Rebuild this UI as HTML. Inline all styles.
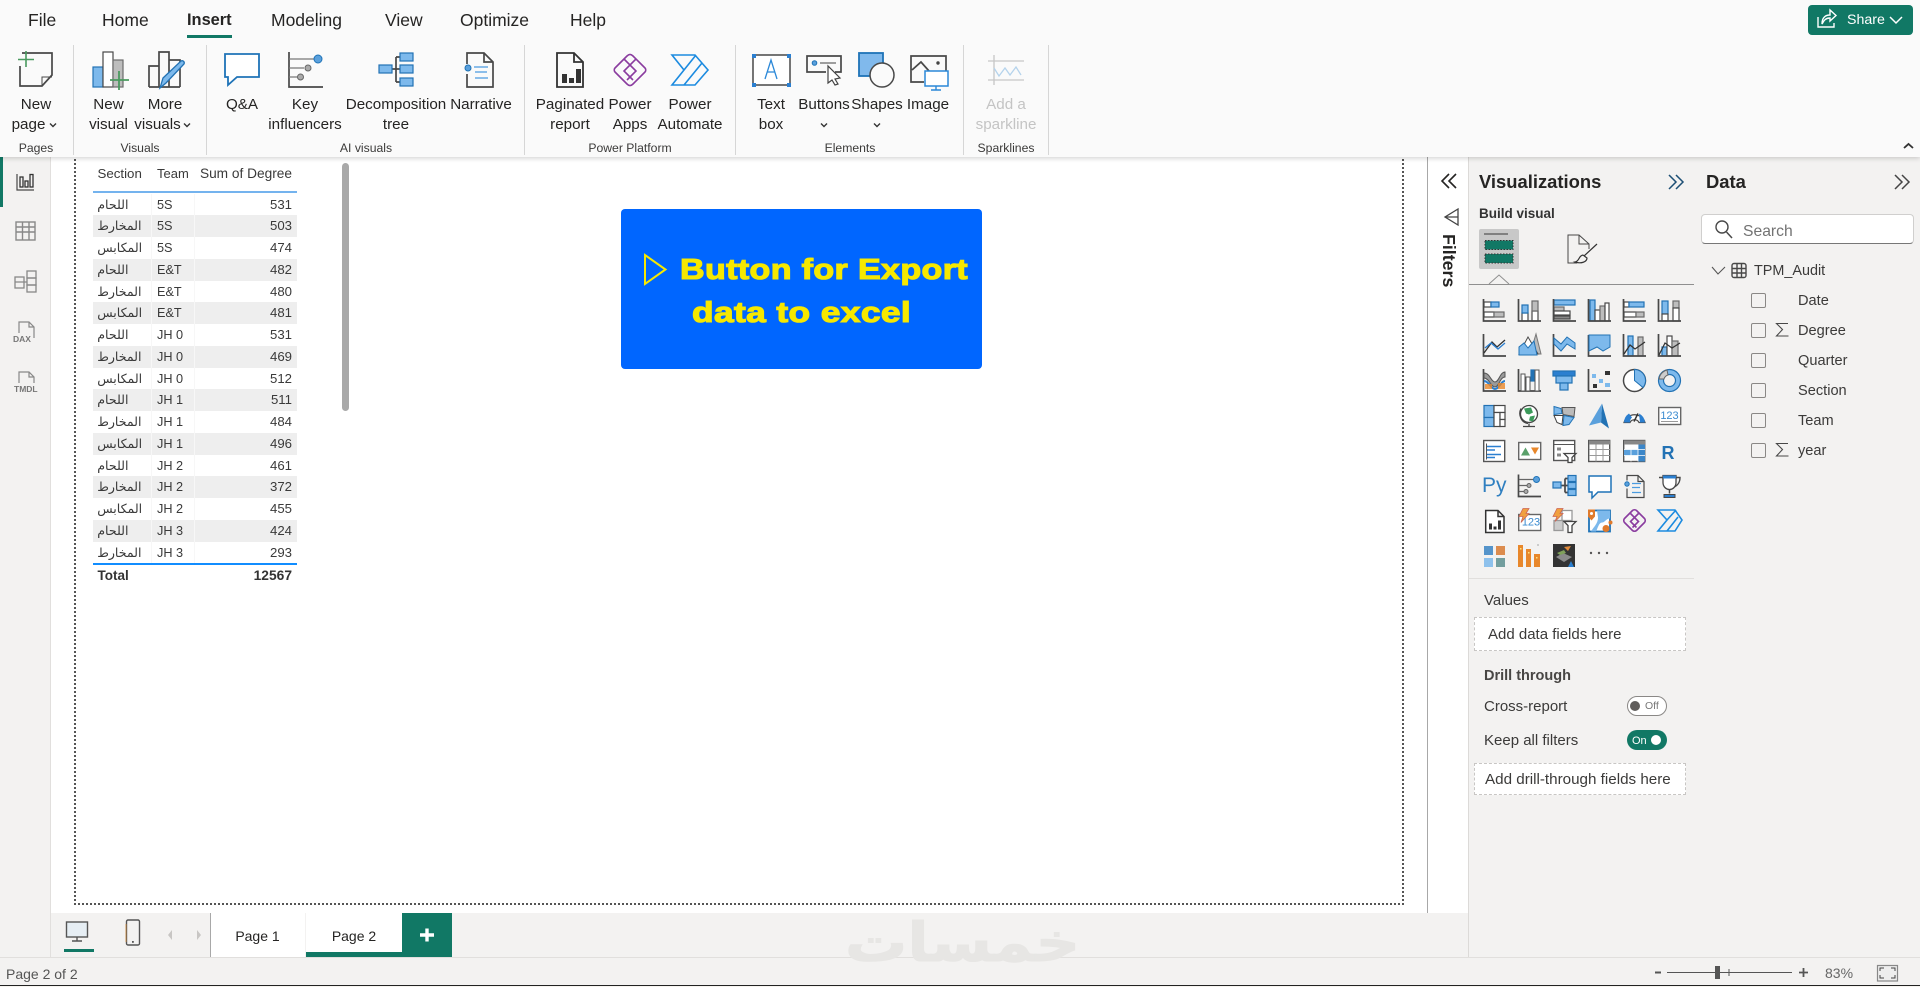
<!DOCTYPE html>
<html><head><meta charset="utf-8"><title>Power BI Desktop</title>
<style>
html,body{margin:0;padding:0;width:1920px;height:987px;overflow:hidden;background:#fff}
body{position:relative;font-family:"Liberation Sans","DejaVu Sans",sans-serif;color:#252423}
.a{position:absolute;white-space:nowrap}
.c{position:absolute;white-space:nowrap;transform:translateX(-50%);text-align:center}
.tab{position:absolute;top:10px;font-size:17.5px;line-height:20px;color:#252423}
.rl{font-size:15.2px;line-height:20px;color:#252423}
.gl{font-size:12.2px;line-height:14px;top:141px;color:#3b3a39}
.sep{position:absolute;top:45px;height:110px;width:1px;background:#d6d6d6}
.row{position:absolute;left:93px;width:204px;height:21.75px;margin-top:-.3px;font-size:12.7px;line-height:21.75px;color:#3a3a3a}
.row.s{background:#eee}
.row:after{content:"";position:absolute;left:58px;top:0;bottom:0;width:1px;background:#f7f7f7}
.row:before{content:"";position:absolute;left:101px;top:0;bottom:0;width:1px;background:#f7f7f7;z-index:1}
.row b{font-weight:normal;position:absolute;left:4.2px;top:0;font-family:"DejaVu Sans",sans-serif;font-size:12.6px}
.row i{font-style:normal;position:absolute;left:64px;top:.8px}
.row u{text-decoration:none;position:absolute;right:5px;top:0;font-size:13.2px}
.f{position:absolute;left:1798px;font-size:14.6px;line-height:18px;color:#3b3a39}
.cb{position:absolute;left:1750.5px;width:13px;height:13px;border:1px solid #8a8886;border-radius:2px}
.box{position:absolute;left:1474px;width:212px;background:#fff;border:1px dashed #c8c6c4;box-sizing:border-box;color:#3b3a39}
.ft{font-size:15px;line-height:18px;color:#3b3a39}
svg{position:absolute;left:0;top:0;overflow:visible}
.k{fill:none;stroke:#484848;stroke-width:1.7}
.k1{fill:none;stroke:#484848;stroke-width:1}
.b{fill:none;stroke:#1f73b7;stroke-width:1.5}
.w{fill:#fff;stroke:#484848;stroke-width:1.2}
.lb{fill:#7db9ec;stroke:#2272b4;stroke-width:1.2}
.bb{fill:#2272b4}
.g{fill:#bdbdbd;stroke:#6b6b6b;stroke-width:1.2}
.p{fill:none;stroke:#8a3c9f;stroke-width:1.6}
.au{fill:none;stroke:#1c8be0;stroke-width:1.6}
.or{fill:#e8872b}
.bt{font-size:29px;line-height:38px;font-weight:bold;color:#f6e800;-webkit-text-stroke:1.1px #f6e800;letter-spacing:.3px;transform-origin:0 50%}
</style></head><body>

<!-- canvas -->
<div class="a" style="left:0;top:157px;width:51px;height:800px;background:#f3f2f1;border-right:1px solid #e1dfdd;box-sizing:border-box"></div>
<div class="a" style="left:0;top:157px;width:3px;height:50px;background:#117865"></div>
<div class="a" style="left:74px;top:120px;width:1330px;height:785px;border:2px dotted #555;box-sizing:border-box"></div>
<div class="a" style="left:1427px;top:157px;width:1px;height:756px;background:#a8a8a8"></div>
<div class="a" style="left:1468px;top:157px;width:226px;height:800px;background:#f3f2f1;border-left:1px solid #dcdad8;border-right:1px solid #dcdad8;box-sizing:content-box"></div>
<div class="a" style="left:1695px;top:157px;width:225px;height:800px;background:#f3f2f1"></div>
<div class="a" style="left:51px;top:913px;width:1417px;height:44px;background:#f3f2f1"></div>

<!-- table -->
<div class="a" style="left:97.5px;top:165px;font-size:13.3px;line-height:18px;color:#3a3a3a">Section</div>
<div class="a" style="left:157px;top:165px;font-size:13px;line-height:18px;color:#3a3a3a">Team</div>
<div class="a" style="right:1628px;top:165px;font-size:13.7px;line-height:18px;color:#3a3a3a">Sum of Degree</div>
<div class="a" style="left:93px;top:191px;width:204px;height:2px;background:#74b3ee"></div>
<div class="row" style="top:194px"><b>اللحام</b><i>5S</i><u>531</u></div>
<div class="row s" style="top:215.7px"><b>المخارط</b><i>5S</i><u>503</u></div>
<div class="row" style="top:237.5px"><b>المكابس</b><i>5S</i><u>474</u></div>
<div class="row s" style="top:259.2px"><b>اللحام</b><i>E&amp;T</i><u>482</u></div>
<div class="row" style="top:281px"><b>المخارط</b><i>E&amp;T</i><u>480</u></div>
<div class="row s" style="top:302.7px"><b>المكابس</b><i>E&amp;T</i><u>481</u></div>
<div class="row" style="top:324.5px"><b>اللحام</b><i>JH 0</i><u>531</u></div>
<div class="row s" style="top:346.2px"><b>المخارط</b><i>JH 0</i><u>469</u></div>
<div class="row" style="top:368px"><b>المكابس</b><i>JH 0</i><u>512</u></div>
<div class="row s" style="top:389.7px"><b>اللحام</b><i>JH 1</i><u>511</u></div>
<div class="row" style="top:411.5px"><b>المخارط</b><i>JH 1</i><u>484</u></div>
<div class="row s" style="top:433.2px"><b>المكابس</b><i>JH 1</i><u>496</u></div>
<div class="row" style="top:455px"><b>اللحام</b><i>JH 2</i><u>461</u></div>
<div class="row s" style="top:476.7px"><b>المخارط</b><i>JH 2</i><u>372</u></div>
<div class="row" style="top:498.5px"><b>المكابس</b><i>JH 2</i><u>455</u></div>
<div class="row s" style="top:520.2px"><b>اللحام</b><i>JH 3</i><u>424</u></div>
<div class="row" style="top:542px"><b>المخارط</b><i>JH 3</i><u>293</u></div>
<div class="a" style="left:93px;top:563px;width:204px;height:2px;background:#118dff"></div>
<div class="a" style="left:97.5px;top:567px;font-size:13.5px;line-height:18px;font-weight:bold;color:#333">Total</div>
<div class="a" style="right:1628px;top:567px;font-size:13.8px;line-height:18px;font-weight:bold;color:#333">12567</div>
<div class="a" style="left:342px;top:163px;width:7px;height:248px;background:#a9a9a9;border-radius:4px"></div>

<!-- export button -->
<div class="a" style="left:621px;top:209px;width:361px;height:160px;background:#0066ff;border-radius:4px"></div>
<div class="a bt" style="left:680px;top:251px;transform:scaleX(1.175)">Button for Export</div>
<div class="a bt" style="left:692px;top:294px;transform:scaleX(1.22)">data to excel</div>

<!-- ribbon -->
<div class="a" style="left:0;top:0;width:1920px;height:157px;background:#fafafa;box-shadow:0 1px 5px rgba(0,0,0,.2)"></div>
<div class="tab" style="left:28px">File</div>
<div class="tab" style="left:102px">Home</div>
<div class="tab" style="left:187px;font-weight:bold;font-size:16.4px">Insert</div>
<div class="tab" style="left:271px">Modeling</div>
<div class="tab" style="left:385px">View</div>
<div class="tab" style="left:460px">Optimize</div>
<div class="tab" style="left:570px">Help</div>
<div class="a" style="left:187px;top:35px;width:45px;height:3px;background:#117865"></div>
<div class="sep" style="left:73px"></div><div class="sep" style="left:206px"></div><div class="sep" style="left:524px"></div><div class="sep" style="left:735px"></div><div class="sep" style="left:963px"></div><div class="sep" style="left:1048px"></div>

<div class="c rl" style="left:36px;top:95px">New</div><div class="c rl" style="left:28.5px;top:115px">page</div>
<div class="c rl" style="left:108.5px;top:95px">New<br>visual</div>
<div class="c rl" style="left:165px;top:95px">More</div><div class="c rl" style="left:157.5px;top:115px">visuals</div>
<div class="c rl" style="left:242px;top:95px">Q&amp;A</div>
<div class="c rl" style="left:305px;top:95px">Key<br>influencers</div>
<div class="c rl" style="left:396px;top:95px">Decomposition<br>tree</div>
<div class="c rl" style="left:481px;top:95px">Narrative</div>
<div class="c rl" style="left:570px;top:95px">Paginated<br>report</div>
<div class="c rl" style="left:630px;top:95px">Power<br>Apps</div>
<div class="c rl" style="left:690px;top:95px">Power<br>Automate</div>
<div class="c rl" style="left:771px;top:95px">Text<br>box</div>
<div class="c rl" style="left:824px;top:95px">Buttons</div>
<div class="c rl" style="left:877px;top:95px">Shapes</div>
<div class="c rl" style="left:928px;top:95px">Image</div>
<div class="c rl" style="left:1006px;top:95px;color:#c4c4c4">Add a<br>sparkline</div>

<div class="c gl" style="left:36px">Pages</div><div class="c gl" style="left:140px">Visuals</div><div class="c gl" style="left:366px">AI visuals</div><div class="c gl" style="left:630px">Power Platform</div><div class="c gl" style="left:850px">Elements</div><div class="c gl" style="left:1006px">Sparklines</div>

<!-- share -->
<div class="a" style="left:1808px;top:5px;width:105px;height:30px;background:#117865;border-radius:4px"></div>
<div class="a" style="left:1847px;top:10px;font-size:14.2px;line-height:20px;color:#fff">Share</div>

<!-- filters / panes text -->
<div class="a" style="left:1439px;top:234px;writing-mode:vertical-rl;font-size:17.8px;line-height:20px;font-weight:bold;color:#252423">Filters</div>
<div class="a" style="left:1479px;top:171px;font-size:18.4px;line-height:22px;font-weight:bold">Visualizations</div>
<div class="a" style="left:1706px;top:171px;font-size:18.4px;line-height:22px;font-weight:bold">Data</div>
<div class="a" style="left:1479px;top:206px;font-size:13.5px;line-height:16px;font-weight:bold;color:#333">Build visual</div>
<div class="a" style="left:1479px;top:229px;width:40px;height:40px;background:#c8c8c8;border-radius:2px"></div>
<div class="a" style="left:1469px;top:284px;width:225px;height:1px;background:#8f8f8f"></div>
<div class="a" style="left:1469px;top:578px;width:225px;height:1px;background:#e1dfdd"></div>
<div class="a ft" style="left:1484px;top:591.5px">Values</div>
<div class="box ft" style="top:617px;height:34px;line-height:33px;padding-left:13px">Add data fields here</div>
<div class="a" style="left:1484px;top:667px;font-size:14.5px;line-height:18px;font-weight:bold;color:#484644">Drill through</div>
<div class="a ft" style="left:1484px;top:697.5px">Cross-report</div>
<div class="a ft" style="left:1484px;top:732px">Keep all filters</div>
<div class="a" style="left:1627px;top:696px;width:40px;height:20px;border:1px solid #8a8886;border-radius:10px;background:#fff;box-sizing:border-box"></div>
<div class="a" style="left:1630px;top:701px;width:10px;height:10px;border-radius:50%;background:#605e5c"></div>
<div class="a" style="left:1645px;top:700px;font-size:10.5px;line-height:13px;color:#777">Off</div>
<div class="a" style="left:1627px;top:730px;width:40px;height:20px;border-radius:10px;background:#117865"></div>
<div class="a" style="left:1632px;top:734px;font-size:11px;line-height:14px;color:#fff">On</div>
<div class="a" style="left:1651px;top:735px;width:10px;height:10px;border-radius:50%;background:#fff"></div>
<div class="box" style="top:763px;height:32px;line-height:32px;padding-left:10px;font-size:15.2px">Add drill-through fields here</div>

<!-- data pane -->
<div class="a" style="left:1701px;top:214px;width:213px;height:30px;background:#fff;border:1px solid #d0cfce;border-bottom-color:#777;border-radius:4px;box-sizing:border-box"></div>
<div class="a" style="left:1743px;top:222.5px;font-size:15.7px;line-height:18px;color:#737373">Search</div>
<div class="a" style="left:1754px;top:262px;font-size:14.4px;line-height:18px;color:#3b3a39">TPM_Audit</div>
<div class="cb" style="top:292.5px"></div><div class="f" style="top:292px">Date</div>
<div class="cb" style="top:322.5px"></div><div class="f" style="top:322px">Degree</div>
<div class="cb" style="top:352.5px"></div><div class="f" style="top:352px">Quarter</div>
<div class="cb" style="top:382.5px"></div><div class="f" style="top:382px">Section</div>
<div class="cb" style="top:412.5px"></div><div class="f" style="top:412px">Team</div>
<div class="cb" style="top:442.5px"></div><div class="f" style="top:442px">year</div>

<!-- bottom tabs -->
<div class="a" style="left:210px;top:913px;width:1px;height:44px;background:#a8a8a8"></div>
<div class="a" style="left:211px;top:913px;width:94px;height:44px;background:#fff"></div>
<div class="a" style="left:306px;top:913px;width:96px;height:44px;background:#fff"></div>
<div class="a" style="left:306px;top:952px;width:96px;height:5px;background:#117865"></div>
<div class="a" style="left:402px;top:913px;width:50px;height:44px;background:#117865"></div>
<div class="c" style="left:257.5px;top:927px;font-size:14px;line-height:18px">Page 1</div>
<div class="c" style="left:354px;top:927px;font-size:14px;line-height:18px">Page 2</div>
<div class="a" style="left:64px;top:949px;width:30px;height:3px;background:#117865"></div>

<!-- status -->
<div class="a" style="left:0;top:957px;width:1920px;height:28px;background:#f3f2f1;border-top:1px solid #e1dfdd;box-sizing:border-box"></div>
<div class="a" style="left:0;top:985px;width:1920px;height:1px;background:#222"></div>
<div class="a" style="left:0;top:986px;width:1920px;height:1px;background:#f6f4ef"></div>
<div class="a" style="left:6px;top:965px;font-size:14px;line-height:18px;color:#555">Page 2 of 2</div>
<div class="a" style="left:1825px;top:964px;font-size:14px;line-height:18px;color:#666">83%</div>
<div class="a" style="left:845px;top:908px;font-family:'DejaVu Sans',sans-serif;font-weight:bold;font-size:54px;line-height:70px;color:#e7e6e4;-webkit-text-stroke:1px #e7e6e4;transform-origin:0 50%;transform:scaleX(1.15)" dir="rtl">خمسات</div>

<svg width="1920" height="987" viewBox="0 0 1920 987">
<!-- small chevrons -->
<g fill="none" stroke="#333" stroke-width="1.4">
<path d="M50 123.500l3 3 3-3M184 123.500l3 3 3-3M821 123.500l3 3 3-3M874 123.500l3 3 3-3"/>
</g>
<!-- New page -->
<path class="k" d="M22 53H52V75L42 86H20V66"/><path class="k1" d="M42 86V77H52"/>
<path d="M18 59.500H34M26 51V67" stroke="#4a9a5f" stroke-width="1.600" fill="none"/>
<!-- New visual -->
<rect class="lb" x="93" y="67" width="10" height="20"/><rect class="w" x="103" y="52" width="10" height="35"/><rect class="g" x="113" y="60" width="10" height="27"/>
<path d="M110 80H129M119 71V90" stroke="#4a9a5f" stroke-width="1.800" fill="none"/>
<!-- More visuals -->
<path class="k" d="M149 87V66H159M159 87V52H169V87M169 60H180V87M149 87H180"/>
<path d="M160 88l3-10 18-17c2-1 4 1 3 3L166 83z" fill="#7db9ec" stroke="#2272b4" stroke-width="1.300"/>
<!-- Q&A -->
<path d="M225 54H259V77H237L228 85V77H225Z" fill="#fff" stroke="#1f73b7" stroke-width="1.800"/>
<!-- Key influencers -->
<path class="k" d="M289 52V87H323"/><path d="M289 59H314M289 68H304M289 77H298" stroke="#777" stroke-width="1.300"/>
<circle cx="318" cy="59" r="4" fill="#5aa0dc" stroke="#1f73b7"/><circle cx="308" cy="68" r="3" fill="#aaa" stroke="#666"/><circle cx="300.500" cy="77" r="3" fill="#aaa" stroke="#666"/>
<!-- Decomposition -->
<g><path class="k" d="M392 69H396M396 57V82M396 57H400M396 69H400M396 82H400"/><rect class="lb" x="379" y="65" width="13" height="8"/><rect class="lb" x="400" y="53" width="13" height="8"/><rect class="lb" x="400" y="65" width="13" height="8"/><rect class="lb" x="400" y="78" width="13" height="8"/></g>
<!-- Narrative -->
<path class="k" d="M467 64V53H484L493 62V87H467V74M484 53V62H493"/><circle cx="468" cy="68" r="3" fill="#5aa0dc" stroke="#1f73b7"/><path d="M474 67H488M475 72H487M475 78H488" stroke="#4a9be0" stroke-width="1.300"/>
<!-- Paginated -->
<path d="M557 53H574L583 62V87H557Z M574 53V62H583" fill="none" stroke="#333" stroke-width="1.800"/><path d="M562 74h5v9h-5zM569 78h5v5h-5zM576 69h5v14h-5z" fill="#333"/>
<!-- Power Apps -->
<g transform="translate(630 70)"><path class="p" d="M-3-14C-1-16 1-16 3-14L15-2C16-1 16 1 15 2L3 14C1 16-1 16-3 14L-15 2C-16 1-16-1-15-2Z"/><path class="p" d="M-6-11L6 1-3 10M6-11L-6 1 3 10" stroke-width="1.400"/></g>
<!-- Power Automate -->
<path class="au" d="M672 55H695L708 70 695 85H672L684 70Z M684 70L696 55M684 85L702 63"/>
<!-- Text box -->
<rect x="753" y="55" width="37" height="30" fill="#fff" stroke="#484848" stroke-width="1.500"/><path d="M752 54h4v4h-4zM787 54h4v4h-4zM752 83h4v4h-4zM787 83h4v4h-4z" fill="#2b7fd0"/><path d="M765 79L771 60 777 79M767 72H775" fill="none" stroke="#2b88d8" stroke-width="1.300"/>
<!-- Buttons -->
<path class="k" d="M826 72H807V56H841V72H835"/><circle cx="814.500" cy="63" r="2.300" fill="#5aa0dc" stroke="#1f73b7"/><path d="M820 63H836" stroke="#777" stroke-width="1.400"/><path d="M828 66V83L832 80 835 85 838 84 835 79 840 78Z" fill="#fff" stroke="#444" stroke-width="1.200"/>
<!-- Shapes -->
<rect x="859" y="53" width="24" height="23" fill="#80b9ec" stroke="#1f73b7" stroke-width="1.800"/><circle cx="882" cy="75" r="12" fill="#fafafa" stroke="#484848" stroke-width="1.500"/>
<!-- Image -->
<path class="k" d="M924 82H911V56H946V71M912 70L921 62 929 71"/><circle cx="938" cy="63" r="1.700" fill="#444"/><rect x="925" y="71" width="23" height="15" fill="#fff" stroke="#2b88d8" stroke-width="1.500"/><path d="M936 86V90M931 90H941" stroke="#2b88d8" stroke-width="1.400"/>
<!-- Sparkline -->
<path d="M988 61H1024M988 80H1024M994 55V85" stroke="#c6c6c6" stroke-width="1.300" fill="none"/><path d="M994 68L999 76 1005 68 1010 75 1016 67 1021 75" stroke="#b5d3ec" stroke-width="1.300" fill="none"/>

<!-- Share icon -->
<g fill="none" stroke="#fff" stroke-width="1.400"><path d="M1818 17V27H1834V23M1822 24C1822 17 1826 15 1830 15V10L1836 15.500 1830 21V18C1826 18 1824 20 1822 24Z"/><path d="M1890 17l6 6 6-6" stroke-width="1.500"/></g>
<path d="M1904 148l4.500-4 4.500 4" fill="none" stroke="#333" stroke-width="1.800"/>

<!-- pane chevrons -->
<g fill="none" stroke="#252423" stroke-width="1.500">
<path d="M1449 174l-7 7 7 7M1456 174l-7 7 7 7" stroke-width="1.600"/>
<path d="M1669 175l7 7-7 7M1676 175l7 7-7 7" stroke="#1d4f75"/><path d="M1895 175l7 7-7 7M1902 175l7 7-7 7" stroke="#444"/>
<path d="M1458 209V225L1445 217ZM1458 217H1446" stroke="#444" stroke-width="1.300"/>
</g>
<!-- build icons -->
<path d="M1484 234H1508" stroke="#555" stroke-width="1.300"/>
<rect x="1485" y="240.500" width="28" height="9" fill="#117865" stroke="#333" stroke-width="1" stroke-dasharray="1.500 1.500"/>
<rect x="1485" y="254" width="28" height="9" fill="#117865" stroke="#333" stroke-width="1" stroke-dasharray="1.500 1.500"/>
<path class="k1" d="M1577 263H1568V235H1579L1589 244V249M1579 235V244H1589" stroke="#333"/>
<path d="M1597 244L1584 256M1583 255C1578 256 1580 261 1575 262 1581 264 1587 262 1587 258L1583 255" fill="none" stroke="#333" stroke-width="1.200"/>
<path d="M1489 284L1499 275 1509 284" fill="#f3f2f1" stroke="#8f8f8f"/>

<!-- data icons -->
<circle cx="1722" cy="227" r="6" fill="none" stroke="#484848" stroke-width="1.400"/><path d="M1726.500 232L1732 238" stroke="#484848" stroke-width="1.500"/>
<path d="M1712 267l6 7 7-7" fill="none" stroke="#555" stroke-width="1.100"/>
<g fill="none" stroke="#484848" stroke-width="1.400"><rect x="1732" y="263.500" width="14" height="14" rx="2"/><path d="M1737 263.500V277.500M1741.500 263.500V277.500M1732 268.500H1746M1732 273H1746"/></g>
<path d="M1788 323.500H1776.500L1782.500 329.500 1776.500 336H1788.500" fill="none" stroke="#484848" stroke-width="1.100"/>
<path d="M1788 443.500H1776.500L1782.500 449.500 1776.500 456H1788.500" fill="none" stroke="#484848" stroke-width="1.100"/>

<!-- left rail -->
<path d="M17 174V190H34" fill="none" stroke="#484848" stroke-width="1.200"/><g fill="none" stroke="#333" stroke-width="1.300"><rect x="20" y="177" width="3" height="10"/><rect x="25" y="181" width="3" height="6"/><rect x="30" y="174.500" width="3" height="12.500"/></g>
<g fill="none" stroke="#888" stroke-width="1.400"><rect x="16" y="222" width="19" height="18"/><path d="M16 227H35M16 232H35M22.500 222V240M29 222V240"/></g>
<g fill="none" stroke="#888" stroke-width="1.300"><rect x="15" y="277" width="9" height="11"/><path d="M15 282H24M24 282H27"/><rect x="27" y="271" width="9" height="7"/><rect x="27" y="278" width="9" height="7"/><rect x="27" y="285" width="9" height="7"/></g>
<path d="M19 333V322H29L34 327V338M29 322V327H34" fill="none" stroke="#888" stroke-width="1.200"/>
<text x="13" y="342" font-size="8.500" font-weight="bold" fill="#777" font-family="Liberation Sans">DAX</text>
<path d="M19 383V372H29L34 377V383M29 372V377H34" fill="none" stroke="#888" stroke-width="1.200"/>
<text x="14" y="392" font-size="8.500" font-weight="bold" fill="#777" font-family="Liberation Sans">TMDL</text>

<!-- bottom icons -->
<g fill="none" stroke="#555" stroke-width="1.400"><rect x="66.500" y="922" width="21" height="15" fill="#e6eef4"/><path d="M77 937V941M72 941H82"/></g>
<rect x="126.500" y="920" width="13" height="25" rx="1.500" fill="none" stroke="#555" stroke-width="1.400"/><rect x="132" y="941" width="1.800" height="1.800" fill="#555"/><path d="M126 924V942" stroke="#d08a3c" stroke-width=".8"/>
<path d="M172 930l-4 5 4 5zM197 930l4 5-4 5z" fill="#c8c6c4"/>
<path d="M427 928.500V941.500M420 935H434" stroke="#fff" stroke-width="3.400"/>

<!-- zoom -->
<path d="M1655 972.500H1661" stroke="#555" stroke-width="2"/><path d="M1667 972.500H1792M1729 969V976" stroke="#555" stroke-width="1"/>
<rect x="1715" y="966" width="5" height="13" fill="#555"/><path d="M1799 972.500H1808M1803.500 968V977" stroke="#555" stroke-width="1.800"/>
<rect x="1877.500" y="965.500" width="20" height="15.500" fill="#eee" stroke="#888" stroke-width="1.200"/><path d="M1880 971V968H1884M1891 968H1895V971M1895 975V978H1891M1884 978H1880V975" fill="none" stroke="#444" stroke-width="1"/>

<!-- VIZ GRID -->
<!-- row 1 -->
<g transform="translate(1483 299)"><rect class="w" x="1" y="3" width="7" height="5"/><rect class="lb" x="8" y="3" width="8" height="5"/><rect class="w" x="1" y="13" width="10" height="5"/><rect class="g" x="11" y="13" width="10" height="5"/><path class="k" d="M.500 0V22H23"/></g>
<g transform="translate(1518 299)"><rect class="w" x="4" y="14" width="6" height="8"/><rect class="lb" x="4" y="6" width="6" height="8"/><rect class="w" x="14" y="12" width="6" height="10"/><rect class="g" x="14" y="2" width="6" height="10"/><path class="k" d="M.500 0V22H23"/></g>
<g transform="translate(1553 299)"><rect class="lb" x="1" y="1" width="21" height="5"/><rect class="g" x="1" y="8" width="10" height="4"/><rect class="w" x="1" y="12" width="16" height="4"/><rect class="w" x="1" y="17" width="16" height="3" style="fill:#888"/><path class="k" d="M.500 0V22H23"/></g>
<g transform="translate(1588 299)"><rect class="lb" x="2" y="1" width="5" height="21"/><rect class="w" x="7" y="11" width="5" height="11"/><rect class="g" x="12" y="7" width="5" height="15"/><rect class="w" x="17" y="4" width="4" height="18"/><path class="k" d="M.500 0V22H23"/></g>
<g transform="translate(1623 299)"><rect class="w" x="1" y="3" width="5" height="5"/><rect class="lb" x="6" y="3" width="15" height="5"/><rect class="w" x="1" y="13" width="12" height="5"/><rect class="g" x="13" y="13" width="8" height="5"/><path class="k" d="M.500 0V22H23"/></g>
<g transform="translate(1658 299)"><rect class="lb" x="4" y="2" width="6" height="13"/><rect class="w" x="4" y="15" width="6" height="7"/><rect class="g" x="15" y="2" width="6" height="7"/><rect class="w" x="15" y="9" width="6" height="13"/><path class="k" d="M.500 0V22H23"/></g>
<!-- row 2 -->
<g transform="translate(1483 334)"><path class="k" d="M.500 0V22H23"/><path d="M1 19L9 8 14 13 22 6" fill="none" stroke="#333" stroke-width="1.300"/><path d="M2 14L8 9 15 15 22 9" fill="none" stroke="#2b7fd0" stroke-width="1.300"/></g>
<g transform="translate(1518 334)"><path d="M12 20L18 0 23 20Z" fill="#bbb" stroke="#777"/><path d="M1 20L10 3 20 20Z" fill="#fff" stroke="#484848"/><path d="M1 21V13L6 9 10 14 16 7 19 21Z" fill="#7db9ec" stroke="#2272b4"/></g>
<g transform="translate(1553 334)"><path class="k" d="M.500 0V22H23"/><path d="M1 4L8 10 14 3 22 9V15L14 10 8 17 1 10Z" fill="#7db9ec" stroke="#2272b4"/></g>
<g transform="translate(1588 334)"><path class="k" d="M.500 1V22H23"/><path d="M1 1H22V13L15 17 9 13 1 17Z" fill="#7db9ec" stroke="#2272b4"/></g>
<g transform="translate(1623 334)"><rect class="lb" x="5" y="2" width="5" height="20"/><rect class="g" x="15" y="3" width="5" height="19"/><path class="k" d="M.500 0V22H23"/><path d="M1 20L7 11 12 15 22 8" fill="none" stroke="#333" stroke-width="1.300"/></g>
<g transform="translate(1658 334)"><rect class="lb" x="4" y="13" width="5" height="9"/><rect class="w" x="9" y="2" width="5" height="20"/><rect class="g" x="14" y="7" width="6" height="15"/><path class="k" d="M.500 0V22H23"/><path d="M1 21L7 9 14 14 22 9" fill="none" stroke="#333" stroke-width="1.200"/></g>
<!-- row 3 -->
<g transform="translate(1483 369)"><path class="k" d="M.500 0V22H23"/><path d="M1 4C7 4 8 13 12 13S17 3 22 3V8C17 8 16 18 12 18S6 9 1 9Z" fill="#9a9a9a" stroke="#555"/><path d="M1 12C6 12 8 20 12 20S18 12 22 12" stroke="#2b7fd0" stroke-width="2" fill="none"/><path d="M2 15H9V20H2ZM15 14H22V20H15Z" fill="#e8872b" opacity=".8"/></g>
<g transform="translate(1518 369)"><path class="k" d="M.500 0V22H23"/><rect x="3" y="5" width="4" height="17" fill="#fff" stroke="#555"/><rect x="8" y="8" width="4" height="14" fill="#fff" stroke="#555"/><rect class="lb" x="13" y="1" width="3" height="11" style="fill:#2272b4"/><rect x="17" y="1" width="4" height="21" fill="#fff" stroke="#555"/></g>
<g transform="translate(1553 369)"><rect class="lb" x="0" y="2" width="22" height="5" style="fill:#2b7fd0"/><rect class="lb" x="3" y="7" width="16" height="7"/><rect class="lb" x="7" y="14" width="8" height="7"/></g>
<g transform="translate(1588 369)"><path class="k" d="M.500 0V22H23"/><rect x="4" y="5" width="4" height="4" fill="#7db9ec"/><rect x="11" y="10" width="4" height="4" fill="#7db9ec"/><rect x="17" y="2" width="5" height="4" fill="#333"/><rect x="5" y="15" width="4" height="4" fill="#333"/><rect x="17" y="14" width="5" height="4" fill="#7db9ec"/></g>
<g transform="translate(1623 369)"><circle cx="11.500" cy="11.500" r="11" fill="#fff" stroke="#484848" stroke-width="1.500"/><path d="M11.500 .500A11 11 0 0 1 20 18.500L11.500 11.500Z" fill="#7db9ec" stroke="#2272b4"/></g>
<g transform="translate(1658 369)"><circle cx="11.500" cy="11.500" r="8.500" fill="none" stroke="#7db9ec" stroke-width="5"/><circle cx="11.500" cy="11.500" r="11" fill="none" stroke="#2272b4" stroke-width="1.200"/><circle cx="11.500" cy="11.500" r="6" fill="none" stroke="#2272b4" stroke-width="1.200"/><path d="M1 10A11 11 0 0 1 9 1L10 6A6 6 0 0 0 6 10Z" fill="#ccc" stroke="#666"/></g>
<!-- row 4 -->
<g transform="translate(1483 404.500)"><rect class="lb" x="1" y="1" width="10" height="12"/><rect class="lb" x="1" y="13" width="10" height="9"/><rect class="w" x="11" y="1" width="11" height="7"/><rect class="w" x="11" y="8" width="6" height="14"/><rect class="w" x="17" y="8" width="5" height="7"/><rect class="w" x="17" y="15" width="5" height="7"/></g>
<g transform="translate(1518 404.500)"><circle cx="11" cy="9.500" r="8.500" fill="#fff" stroke="#444" stroke-width="1.300"/><path d="M6 4L13 3 15 8 11 10 8 9ZM12 12L17 11 15 17 11 16Z" fill="#3b9a5a"/><path d="M3 4C0 10 3 18 10 19M5 22H17M11 19V22" fill="none" stroke="#444" stroke-width="1.300"/></g>
<g transform="translate(1553 404.500)"><path d="M1 2L8 4 9 9 1 10Z" fill="#7db9ec" stroke="#2272b4"/><path d="M9 3L22 3 21 12 10 10Z" fill="#bbb" stroke="#555"/><path d="M1 11L10 11 9 20 4 18Z" fill="#fff" stroke="#444"/><path d="M11 11L21 13 16 20 10 21Z" fill="#7db9ec" stroke="#2272b4"/></g>
<g transform="translate(1588 404.500)"><path d="M14 -1L21 24 13 18Z" fill="#2272b4"/><path d="M14 -1L1 21 13 18Z" fill="#5aa0dc"/></g>
<g transform="translate(1623 404.500)"><path d="M1 18A11 11 0 0 1 22 18H16A5 5 0 0 0 7 18Z" fill="#fff" stroke="#484848" stroke-width="1.200"/><path d="M1 18A11 11 0 0 1 6 9L9 13A6 6 0 0 0 7 18Z" fill="#2b7fd0"/><path d="M16 9A11 11 0 0 1 22 18H17Z" fill="#2b7fd0"/><path d="M11 17L15 9" stroke="#333" stroke-width="1.500"/></g>
<g transform="translate(1658 404.500)"><rect x=".700" y="3" width="22" height="17" fill="#fff" stroke="#666" stroke-width="1.400"/><path d="M3 17H20" stroke="#999"/><text x="11.500" y="14.500" font-size="11" fill="#3b8bd0" text-anchor="middle" font-family="Liberation Sans">123</text></g>
<!-- row 5 -->
<g transform="translate(1483 439.500)"><rect x=".700" y="1" width="21" height="21" fill="#fff" stroke="#555" stroke-width="1.400"/><path d="M4 7H18M4 10.500H12M4 15H18M4 18H12" stroke="#2b7fd0" stroke-width="1.500"/><path d="M3.500 4V20" stroke="#555"/></g>
<g transform="translate(1518 439.500)"><rect x=".700" y="3" width="22" height="17" fill="#fff" stroke="#666" stroke-width="1.400"/><path d="M3 16L7.500 8 12 16Z" fill="#5aa06a"/><path d="M13 8H21L17 15Z" fill="#e8872b"/></g>
<g transform="translate(1553 439.500)"><rect x=".700" y="1" width="21" height="20" fill="#fff" stroke="#555" stroke-width="1.400"/><path d="M1 5H22" stroke="#555"/><rect x="4" y="8" width="4" height="3" fill="#888"/><rect x="4" y="14" width="4" height="3" fill="#888"/><path d="M11 14H23L19 18V23H15V18Z" fill="#fff" stroke="#444" stroke-width="1.300"/></g>
<g transform="translate(1588 439.500)"><rect x=".700" y="1" width="21" height="21" fill="#fff" stroke="#555" stroke-width="1.400"/><rect x="1" y="1" width="21" height="4" fill="#888"/><path d="M1 10H22M1 16H22M8 5V22M15 5V22" stroke="#999"/></g>
<g transform="translate(1623 439.500)"><rect x=".700" y="1" width="21" height="21" fill="#fff" stroke="#555" stroke-width="1.400"/><rect x="1" y="1" width="21" height="4" fill="#888"/><rect x="1" y="10" width="21" height="6" fill="#5aa0dc"/><rect x="15" y="5" width="7" height="17" fill="#3b86c8"/><path d="M1 10H22M1 16H22M8 5V22M15 5V22" stroke="#fff" stroke-width=".8"/></g>
<text x="1668" y="459" font-size="18" font-weight="bold" fill="#2272b4" font-family="Liberation Sans" text-anchor="middle">R</text>
<!-- row 6 -->
<text x="1482" y="492" font-size="21" fill="#2f7fc0" font-family="Liberation Sans" style="font-weight:normal;-webkit-text-stroke:.7px #2f7fc0">Py</text>
<g transform="translate(1518 474.500)"><path class="k" d="M.500 0V22H23"/><path d="M1 5H15M1 11H9M1 17H6" stroke="#666" stroke-width="1.200"/><circle cx="18.500" cy="5" r="3" fill="#5aa0dc" stroke="#1f73b7"/><circle cx="11" cy="11" r="2" fill="#aaa" stroke="#666"/><circle cx="8" cy="17" r="2" fill="#aaa" stroke="#666"/></g>
<g transform="translate(1553 474.500)"><path class="k" d="M8 11H12M12 4V18M12 4H15M12 11H15M12 18H15"/><rect class="lb" x="0" y="7.500" width="8" height="6"/><rect class="lb" x="15" y="1" width="8" height="6"/><rect class="lb" x="15" y="8" width="8" height="6"/><rect class="lb" x="15" y="15" width="8" height="6"/></g>
<path d="M1589 476H1611V492H1598L1592 498V492H1589Z" fill="#fff" stroke="#1f73b7" stroke-width="1.500"/>
<g transform="translate(1625 474.500)"><path d="M2 6V1H13L19 7V23H2V14M13 1V7H19" fill="none" stroke="#484848" stroke-width="1.200"/><circle cx="2" cy="9.500" r="2.200" fill="#5aa0dc" stroke="#1f73b7"/><path d="M7 9H16M7 13H15M7 18H16" stroke="#4a9be0" stroke-width="1.200"/></g>
<g transform="translate(1658 474.500)"><path d="M1 3H5C5 9 7 12 11.500 13 16 12 18 9 18 3H22C22 8 20 11 15 13" fill="none" stroke="#484848" stroke-width="1.400"/><path d="M5 1H18V8C18 12 15 15 11.500 15S5 12 5 8Z" fill="#fff" stroke="#484848" stroke-width="1.300"/><path d="M5 1H18V4H5Z" fill="#2b7fd0"/><path d="M11.500 15V19" stroke="#484848" stroke-width="1.500"/><path d="M6 20H17V23H6Z" fill="#2b7fd0" stroke="#484848"/></g>
<!-- row 7 -->
<g transform="translate(1485 509.500)"><path d="M.700 1H13L19 7V23H.700Z M13 1V7H19" fill="#fff" stroke="#333" stroke-width="1.500"/><path d="M4 14h3v6H4zM8.500 17h3v3h-3zM13 11h3v9h-3z" fill="#333"/></g>
<g transform="translate(1518 509.500)"><rect x=".700" y="5" width="22" height="16" fill="#fff" stroke="#666" stroke-width="1.400"/><text x="13" y="16" font-size="11" fill="#3b8bd0" text-anchor="middle" font-family="Liberation Sans">123</text><path d="M5 -1H11L8 4H11L3 13 5 7H1Z" fill="#f0a040" stroke="#c65" stroke-width=".8"/></g>
<g transform="translate(1553 509.500)"><rect x="9" y="1" width="10" height="10" fill="#fff" stroke="#999" stroke-width="1.300"/><rect x="1" y="11" width="9" height="10" fill="#ccc" stroke="#999" stroke-width="1.300"/><path d="M11 12H23L19 16V23H15V16Z" fill="#fff" stroke="#444" stroke-width="1.300"/><path d="M4 -1H10L7 4H10L2 12 4 7H0Z" fill="#f0a040" stroke="#c65" stroke-width=".8"/></g>
<g transform="translate(1588 509.500)"><rect x="1" y="1" width="21" height="21" fill="#fff" stroke="#1f73b7" stroke-width="1.800"/><path d="M9 1H22V9C18 9 17 13 14 13S10 18 8 22H3C6 17 10 14 10 8Z" fill="#7db9ec"/><path d="M0 0H7V7L3.500 11 0 7Z" fill="#e07a2b"/><circle cx="3.500" cy="4" r="1.500" fill="#fff"/><circle cx="18" cy="19" r="3.500" fill="#e07a2b"/><circle cx="22.500" cy="13" r="2" fill="#e07a2b"/></g>
<g transform="translate(1634.500 520.500)"><path class="p" d="M-2-10C-1-11 1-11 2-10L10-2C11-1 11 1 10 2L2 10C1 11-1 11-2 10L-10 2C-11 1-11-1-10-2Z"/><path class="p" d="M-4-7L4 1-2 7M4-7L-4 1 2 7" stroke-width="1.200"/></g>
<path class="au" d="M1658 510H1675L1682 520 1675 531H1658L1667 520Z M1667 520L1676 510M1667 531L1678 517" stroke-width="1.500"/>
<!-- row 8 -->
<g transform="translate(1484 546)" opacity=".85"><rect x="0" y="0" width="9" height="9" fill="#3a84c4"/><rect x="12" y="0" width="9" height="9" fill="#d97b32"/><rect x="0" y="12" width="9" height="9" fill="#7db9ec"/><rect x="12" y="12" width="9" height="9" fill="#5d9090"/></g>
<g transform="translate(1518 544)"><rect x="0" y="1" width="5" height="22" fill="#e8872b"/><rect x="8" y="5" width="5" height="18" fill="#e8872b"/><rect x="16" y="10" width="6" height="13" fill="#e8872b"/><rect x="19" y="0" width="2" height="2" fill="#ccc"/><rect x="2" y="4" width="1.500" height="1.500" fill="#ffe37a"/><rect x="10" y="8" width="1.500" height="1.500" fill="#ffe37a"/><rect x="18" y="13" width="1.500" height="1.500" fill="#ffe37a"/></g>
<g transform="translate(1553 544)"><rect x="0" y="0" width="22" height="23" fill="#333"/><path d="M3 13L10 9 19 13 11 18Z" fill="#8a8a8a"/><path d="M4 9L11 6 13 9 7 11Z" fill="#7fa05a"/><path d="M11 3L18 2 15 7Z" fill="#e08a3a"/><path d="M15 23L18 17 21 23Z" fill="#2b7fd0"/></g>
<g fill="#555"><circle cx="1591" cy="553" r="1.200"/><circle cx="1599" cy="553" r="1.200"/><circle cx="1607" cy="553" r="1.200"/></g>
<!-- button triangle -->
<path d="M645 255V284L665.500 269.500Z" fill="none" stroke="#f6e800" stroke-width="2"/>
</svg>
</body></html>
